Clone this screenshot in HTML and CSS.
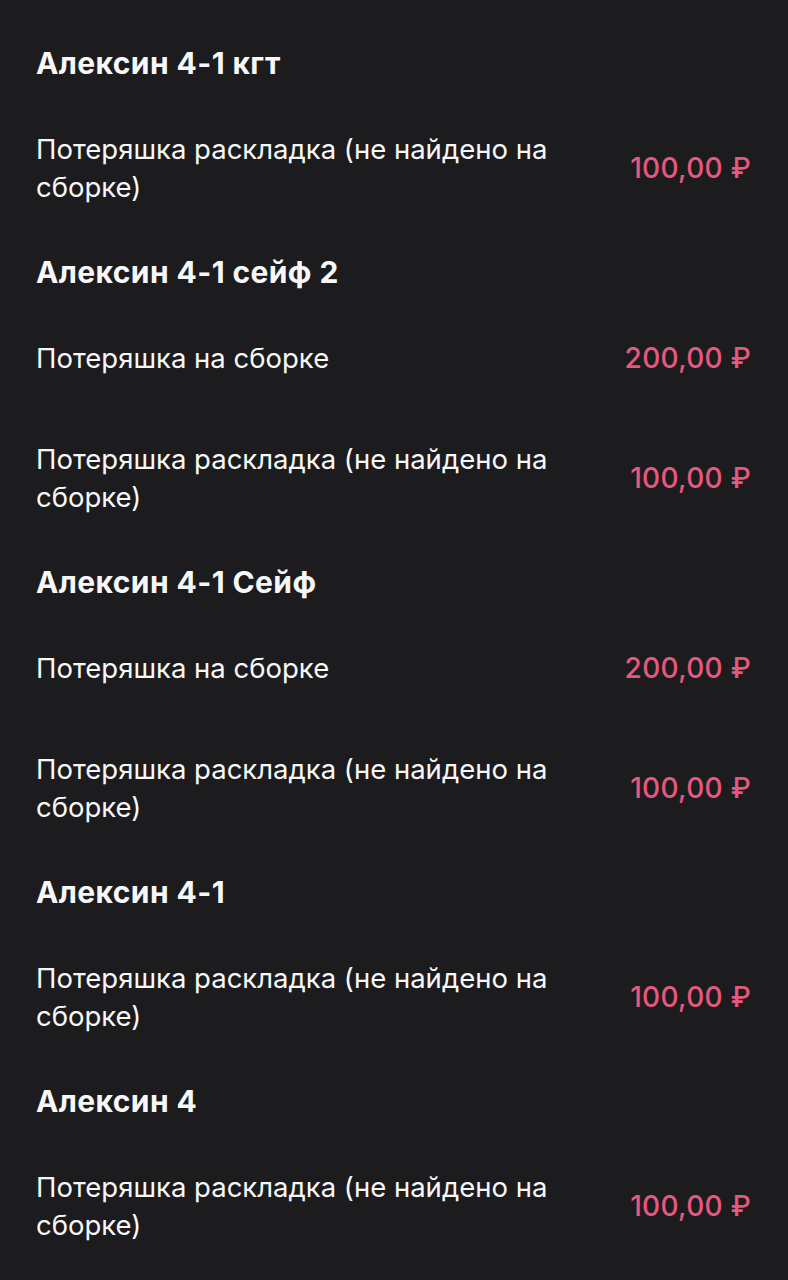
FILE: index.html
```html
<!DOCTYPE html>
<html lang="ru">
  <head>
    <meta charset="UTF-8" />
    <meta name="viewport" content="width=device-width, initial-scale=1.0" />
    <title>Потеряшки</title>
    <link rel="stylesheet" href="styles.css">
  </head>
  <body>
    <main class="lista">
      <!-- Алексин 4-1 кгт -->
      <section class="grupo">
        <h2>Алексин 4-1 кгт</h2>
        <div class="linha">
          <span class="motivo">Потеряшка раскладка (не найдено на сборке)</span>
          <span class="valor">100,00 ₽</span>
        </div>
      </section>

      <section class="grupo">
        <h2>Алексин 4-1 сейф 2</h2>
        <div class="linha">
          <span class="motivo">Потеряшка на сборке</span>
          <span class="valor">200,00 ₽</span>
        </div>
        <div class="linha">
          <span class="motivo">Потеряшка раскладка (не найдено на сборке)</span>
          <span class="valor">100,00 ₽</span>
        </div>
      </section>

      <section class="grupo">
        <h2>Алексин 4-1 Сейф</h2>
        <div class="linha">
          <span class="motivo">Потеряшка на сборке</span>
          <span class="valor">200,00 ₽</span>
        </div>
        <div class="linha">
          <span class="motivo">Потеряшка раскладка (не найдено на сборке)</span>
          <span class="valor">100,00 ₽</span>
        </div>
      </section>

      <section class="grupo">
        <h2>Алексин 4-1</h2>
        <div class="linha">
          <span class="motivo">Потеряшка раскладка (не найдено на сборке)</span>
          <span class="valor">100,00 ₽</span>
        </div>
      </section>

      <section class="grupo">
        <h2>Алексин 4</h2>
        <div class="linha">
          <span class="motivo">Потеряшка раскладка (не найдено на сборке)</span>
          <span class="valor">100,00 ₽</span>
        </div>
      </section>
    </main>
  </body>
</html>
```

FILE: styles.css
```css
:root {
  --fundo: #1c1c1e;
  --texto: #f7f7f8;
  --rosa: #e6587d;
}

* {
  margin: 0;
  padding: 0;
  box-sizing: border-box;
}

body {
  font-family: Inter, "Noto Sans", sans-serif;
  background-color: var(--fundo);
  color: var(--texto);
  min-height: 100vh;
}

.lista {
  padding: 28px 37px 0 36px;
}

.grupo h2 {
  font-size: 30px;
  font-weight: 700;
  line-height: 70px;
  height: 70px;
  letter-spacing: 0.4px;
}

.linha {
  display: flex;
  align-items: center;
  gap: 24px;
  padding: 32px 0 31px;
  font-size: 27.5px;
  line-height: 38px;
}

.motivo {
  flex: 1;
}

.valor {
  color: var(--rosa);
  font-size: 28px;
  font-weight: 500;
  letter-spacing: 0.3px;
  white-space: nowrap;
}
```
